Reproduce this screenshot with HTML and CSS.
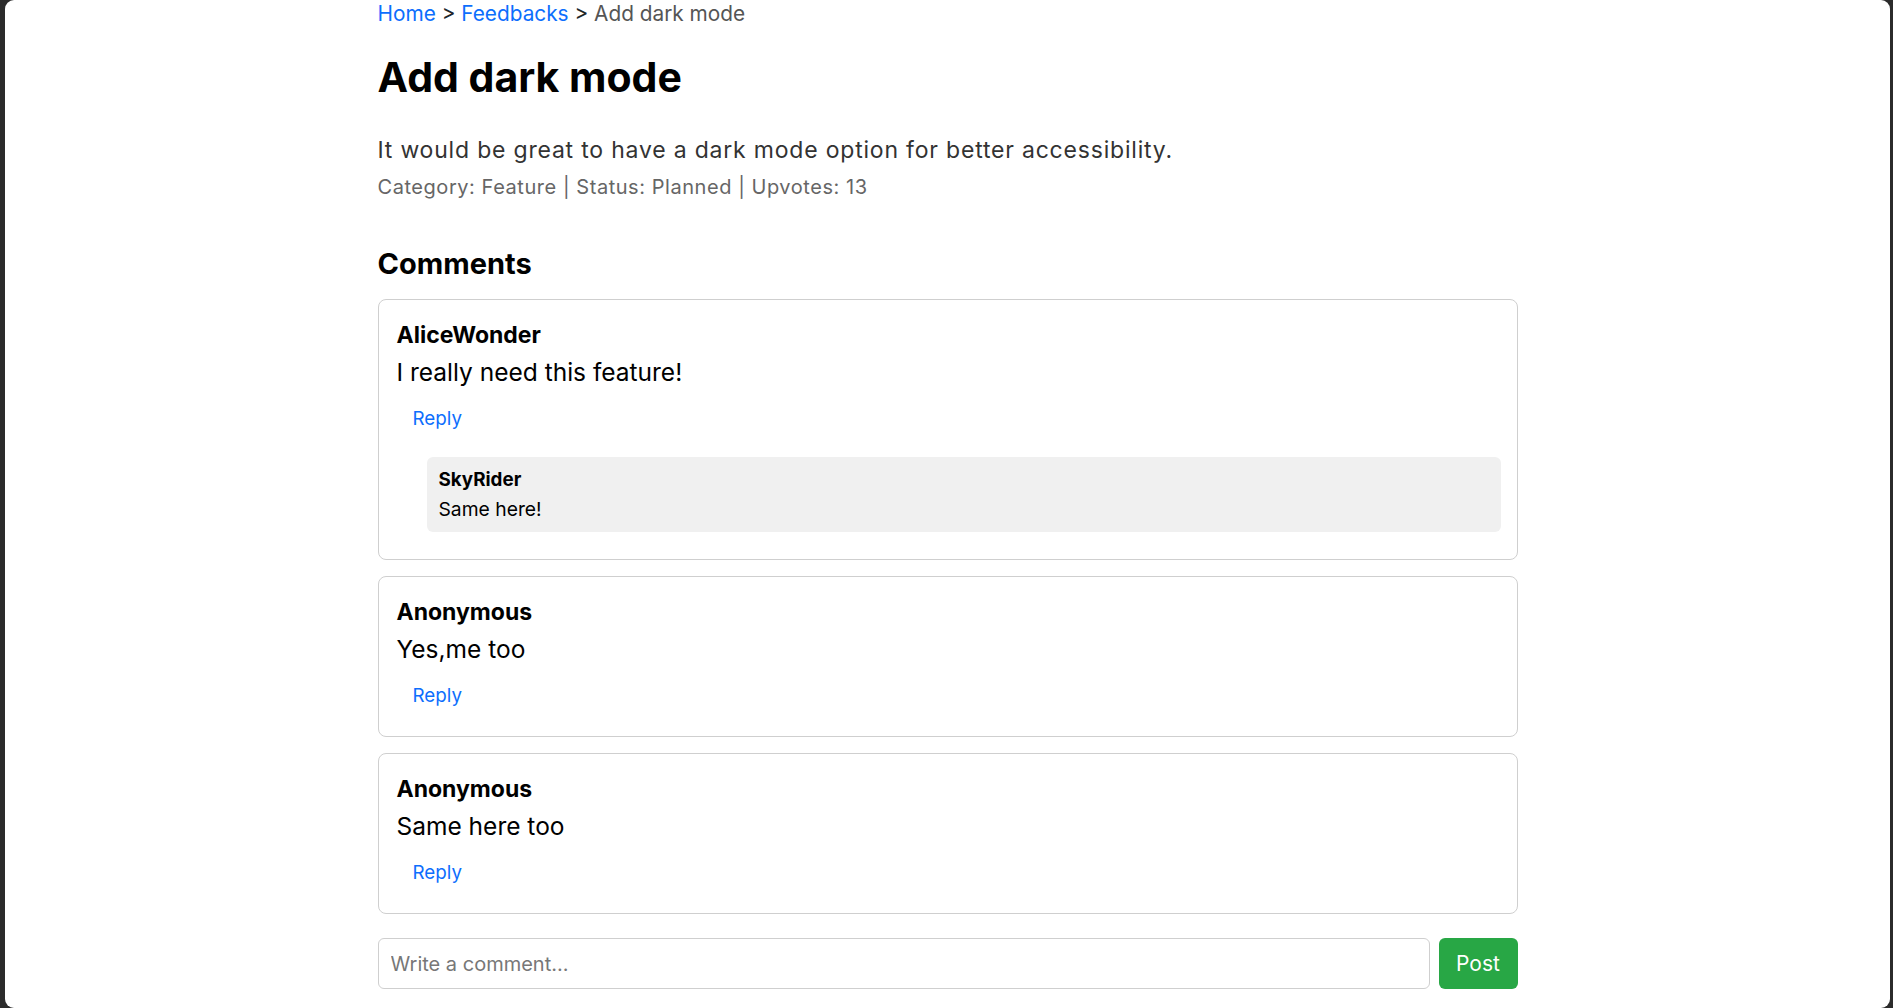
FILE: index.html
```html
<!DOCTYPE html>
<html lang="en">
<head>
<meta charset="utf-8">
<title>Add dark mode</title>
<link rel="stylesheet" href="styles.css">
</head>
<body>
<div class="window">
  <main class="container">
    <nav class="breadcrumb">
      <a href="#" class="crumb-link">Home</a> <span class="sep">&gt;</span> <a href="#" class="crumb-link">Feedbacks</a> <span class="sep">&gt;</span> <span class="crumb-current">Add dark mode</span>
    </nav>
    <h1 class="title">Add dark mode</h1>
    <p class="description">It would be great to have a dark mode option for better accessibility.</p>
    <p class="meta">Category: Feature | Status: Planned | Upvotes: 13</p>

    <h3 class="comments-heading">Comments</h3>

    <div class="comment-card">
      <div class="author">AliceWonder</div>
      <div class="comment-text">I really need this feature!</div>
      <button class="reply-btn">Reply</button>
      <div class="replies">
        <div class="reply-box">
          <div class="reply-author">SkyRider</div>
          <div class="reply-text">Same here!</div>
        </div>
      </div>
    </div>

    <div class="comment-card">
      <div class="author">Anonymous</div>
      <div class="comment-text">Yes,me too</div>
      <button class="reply-btn">Reply</button>
    </div>

    <div class="comment-card">
      <div class="author">Anonymous</div>
      <div class="comment-text">Same here too</div>
      <button class="reply-btn">Reply</button>
    </div>

    <form class="comment-form">
      <input class="comment-input" type="text" placeholder="Write a comment...">
      <button class="post-btn" type="button">Post</button>
    </form>
  </main>
</div>
</body>
</html>
```

FILE: styles.css
```css
* { box-sizing: border-box; }

html, body {
  margin: 0;
  padding: 0;
  height: 100%;
  overflow: hidden;
}

body {
  background: #2b2b2b;
  font-family: Inter, "Noto Sans", sans-serif;
  color: #000;
}

.window {
  margin-left: 5px;
  width: 1885px;
  height: 1008px;
  background: #fff;
  border-radius: 9px;
  overflow: hidden;
}

.container {
  width: 1140px;
  margin: 0 auto;
}

.breadcrumb {
  font-size: 20.8px;
  line-height: 28px;
  color: #212529;
}

.crumb-link {
  color: #0d6efd;
  text-decoration: none;
}

.crumb-current {
  color: #555;
}

.title {
  margin: 25px 0 0;
  font-size: 41px;
  line-height: 48px;
  font-weight: 700;
}

.description {
  margin: 35px 0 0;
  font-size: 23px;
  line-height: 28px;
  letter-spacing: 0.8px;
  color: #333;
}

.meta {
  margin: 11px 0 0;
  font-size: 20px;
  line-height: 24px;
  letter-spacing: 0.55px;
  color: #666;
}

.comments-heading {
  margin: 48px 0 0;
  font-size: 29px;
  line-height: 34px;
  font-weight: 700;
}

.comment-card {
  margin-top: 16px;
  border: 1px solid #cfcfcf;
  border-radius: 8px;
  padding: 21px 16px 16px 18px;
}

.comments-heading + .comment-card {
  margin-top: 18px;
}

.author {
  font-size: 23px;
  line-height: 28px;
  font-weight: 700;
}

.comment-text {
  margin-top: 8px;
  font-size: 24.5px;
  line-height: 30px;
}

.reply-btn {
  display: block;
  margin: 14px 0 6px;
  padding: 6px 17px 6px 16px;
  border: 0;
  background: none;
  font-family: inherit;
  font-size: 18.8px;
  line-height: 24px;
  color: #0d6efd;
  cursor: pointer;
}

.replies {
  margin: 20px 0 11px 30px;
}

.reply-box {
  background: #f0f0f0;
  border-radius: 6px;
  padding: 11px 12px;
}

.reply-author {
  font-size: 18.8px;
  line-height: 24px;
  font-weight: 700;
}

.reply-text {
  margin-top: 5px;
  font-size: 19.3px;
  line-height: 24px;
}

.comment-form {
  display: flex;
  gap: 9px;
  margin-top: 24px;
}

.comment-input {
  flex: 1;
  height: 51px;
  border: 1px solid #cfcfcf;
  border-radius: 6px;
  padding: 0 12px;
  font-family: inherit;
  font-size: 20px;
  color: #333;
}

.comment-input::placeholder {
  color: #777;
}

.post-btn {
  width: 79px;
  height: 51px;
  border: 0;
  border-radius: 6px;
  background: #28a745;
  color: #fff;
  font-family: inherit;
  font-size: 21px;
}
```
